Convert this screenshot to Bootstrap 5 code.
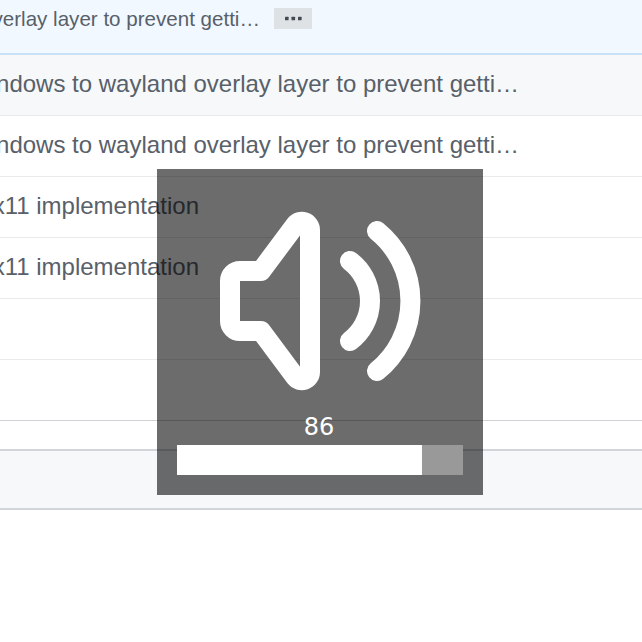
<!DOCTYPE html>
<html lang="en">
<head>
<meta charset="utf-8">
<meta name="viewport" content="width=device-width, initial-scale=1">
<title>Volume</title>
<link href="https://cdn.jsdelivr.net/npm/bootstrap@5.3.0/dist/css/bootstrap.min.css" rel="stylesheet">
<style>
body{font-family:"Liberation Sans",Arial,sans-serif;color:#586069;height:642px}
.commit-head{height:55px;background:#f1f8ff;border-bottom:2px solid #c8e1f5;font-size:20.57px;line-height:24px;padding-top:7px}
.head-text{width:260px}
.more{width:38px;height:21px;margin:1px 0 0 14px;background:#dfe2e5}
.file-row{height:61px;border-bottom:1px solid #e8eaec;font-size:24px;line-height:58px}
.row-text{width:519px}
.short-text{width:199px}
.file-row.alt,.foot{background:#f6f8fa}
.file-row.end{border-bottom-color:#cfd1d4}
.gap-row{height:28px}
.foot{height:61px;border:solid #d1d5da;border-width:2px 0}
.osd{left:157px;top:169px;width:326px;height:326px;background:rgba(0,0,0,.576);padding:0 20px 20px}
.osd-num{font:24px/32px "DejaVu Sans",sans-serif;height:34px;padding-right:2px}
.osd .progress{height:30px;background:#999}
</style>
</head>
<body class="bg-white overflow-hidden position-relative">
<header class="commit-head d-flex">
  <div class="head-text d-flex justify-content-end flex-shrink-0 text-nowrap"><span>windows to wayland overlay layer to prevent getti…</span></div>
  <div class="more flex-shrink-0"><svg class="d-block" width="38" height="21" fill="#444a52" aria-label="More"><rect x="11" y="8.7" width="3.6" height="3.6" rx=".6"/><rect x="17.5" y="8.7" width="3.6" height="3.6" rx=".6"/><rect x="24" y="8.7" width="3.6" height="3.6" rx=".6"/></svg></div>
</header>
<main>
  <div class="file-row alt"><div class="row-text d-flex justify-content-end text-nowrap"><span>windows to wayland overlay layer to prevent getti…</span></div></div>
  <div class="file-row"><div class="row-text d-flex justify-content-end text-nowrap"><span>windows to wayland overlay layer to prevent getti…</span></div></div>
  <div class="file-row"><div class="short-text d-flex justify-content-end text-nowrap"><span>x11 implementation</span></div></div>
  <div class="file-row"><div class="short-text d-flex justify-content-end text-nowrap"><span>x11 implementation</span></div></div>
  <div class="file-row"></div>
  <div class="file-row end"></div>
  <div class="gap-row"></div>
  <div class="foot"></div>
</main>
<div class="osd position-absolute d-flex flex-column justify-content-end text-white">
  <svg class="d-block mx-auto flex-shrink-0" width="286" height="242" viewBox="177 169 286 242" fill="none" stroke="#fff" stroke-width="20" stroke-linecap="round" stroke-linejoin="round" aria-label="Volume">
    <path d="M230 281a10 10 0 0 1 10-10H261L295.3 225A8.2 8.2 0 0 1 310 230V372A8.2 8.2 0 0 1 295.3 377L261 331H240a10 10 0 0 1-10-10Z"/>
    <path d="M350 261A50 50 0 0 1 350 341M377 231A90 90 0 0 1 377 371"/>
  </svg>
  <div class="osd-num text-center">86</div>
  <div class="progress rounded-0"><div class="progress-bar bg-white" style="width:85.7%"></div></div>
</div>
<script src="https://cdn.jsdelivr.net/npm/bootstrap@5.3.0/dist/js/bootstrap.bundle.min.js"></script>
</body>
</html>
